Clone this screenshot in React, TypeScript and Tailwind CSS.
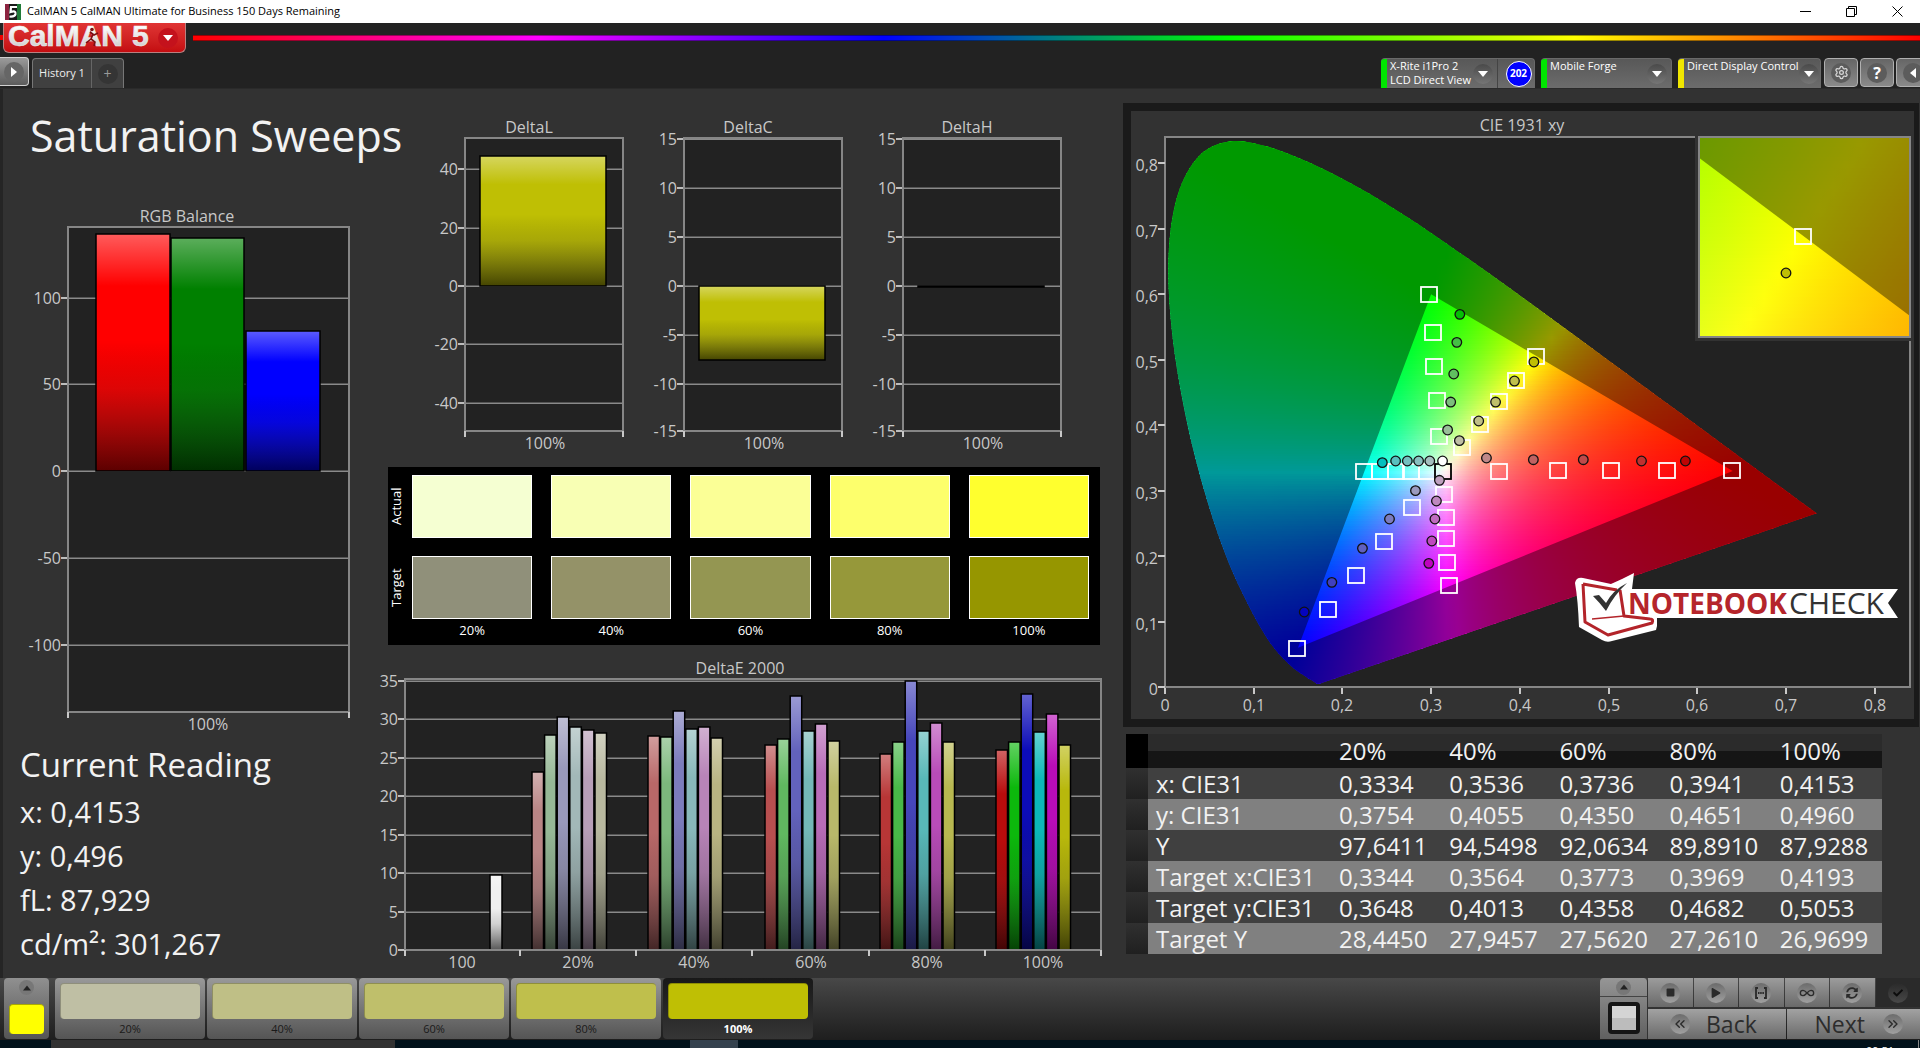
import type { ReactNode } from "react";
import { FaCheck, FaPlay, FaStop, FaSyncAlt } from "react-icons/fa";
import { ChevronsLeft, ChevronsRight, Infinity as InfinityIcon, Settings } from "lucide-react";

const FONT = "'Open Sans', 'Noto Sans', sans-serif";

type Bar = { x: number; width: number; value: number; color: string };

// glossy bar used by every chart, drawn from the zero line
function GlossBar({ bar, y }: { bar: Bar; y: (v: number) => number }) {
  const top = Math.round(y(Math.max(bar.value, 0)));
  const height = Math.max(Math.round(y(Math.min(bar.value, 0))) - top, 1);
  return (
    <g>
      <rect x={bar.x} y={top} width={bar.width} height={height} fill={bar.color} />
      <rect x={bar.x} y={top} width={bar.width} height={height} fill="url(#gloss)" stroke="#000" strokeWidth="1.5" />
    </g>
  );
}

function SharedDefs() {
  return (
    <svg className="absolute h-0 w-0" aria-hidden="true">
      <defs>
        <linearGradient id="gloss" x1="0" y1="0" x2="0" y2="1">
          <stop offset="0" stopColor="#fff" stopOpacity="0.36" />
          <stop offset="0.22" stopColor="#fff" stopOpacity="0" />
          <stop offset="0.45" stopColor="#000" stopOpacity="0" />
          <stop offset="0.65" stopColor="#222" stopOpacity="0.15" />
          <stop offset="1" stopColor="#000" stopOpacity="0.64" />
        </linearGradient>
      </defs>
    </svg>
  );
}

type ChartProps = {
  viewBox: string;
  title: string;
  titleX: number;
  frame: { x: number; y: number; right: number; bottom: number };
  zero: number;
  unit: number;
  ticks: number[];
  categories: { label: string; x: number }[];
  xTicks: number[];
  bars: Bar[];
};

function BarChart({ viewBox, title, titleX, frame, zero, unit, ticks, categories, xTicks, bars }: ChartProps) {
  const y = (v: number) => zero - v * unit;
  const width = frame.right - frame.x;
  return (
    <svg viewBox={viewBox} className="block w-full overflow-visible" role="img" aria-label={title} fontFamily={FONT} fontSize="16" fill="#c8c8c8">
      <text x={titleX} y={frame.y - 5} textAnchor="middle">
        {title}
      </text>
      <rect x={frame.x} y={frame.y} width={width} height={frame.bottom - frame.y} fill="#222" />
      {ticks.map((t) => {
        const line = Math.min(Math.round(y(t)), frame.bottom);
        return (
          <g key={t}>
            <rect x={frame.x} y={line - 1} width={width} height="1" fill="#555" />
            <rect x={frame.x} y={line} width={width} height="1" fill="#8a8a8a" />
            <rect x={frame.x - 7} y={line - 1} width="7" height="2" fill="#bdbdbd" />
            <text x={frame.x - 7} y={line + 6} textAnchor="end">
              {t}
            </text>
          </g>
        );
      })}
      {bars.map((bar) => (
        <GlossBar key={bar.x} bar={bar} y={y} />
      ))}
      <rect x={frame.x} y={frame.y} width={width} height={frame.bottom - frame.y} fill="none" stroke="#868686" strokeWidth="2" />
      {xTicks.map((x) => (
        <rect key={x} x={x - 1} y={frame.bottom} width="2" height="6" fill="#c8c8c8" />
      ))}
      {categories.map((c) => (
        <text key={c.label} x={c.x} y={frame.bottom + 18} textAnchor="middle">
          {c.label}
        </text>
      ))}
    </svg>
  );
}

const YELLOW = "#bfbf04";

const deltaCharts = [
  { title: "DeltaL", zero: 176, unit: 2.92, ticks: [40, 20, 0, -20, -40], value: 44.4 },
  { title: "DeltaC", zero: 176, unit: 9.8, ticks: [15, 10, 5, 0, -5, -10, -15], value: -7.5 },
  { title: "DeltaH", zero: 176, unit: 9.8, ticks: [15, 10, 5, 0, -5, -10, -15], value: 0 },
];

const deltaE = [
  { start: 532, values: [23.1, 27.9, 30.3, 28.9, 28.6, 28.2], colors: ["#b98585", "#96b896", "#9999bb", "#a2b8b8", "#b89fb8", "#b8b89f"] },
  { start: 648, values: [27.8, 27.6, 31, 28.7, 28.9, 27.5], colors: ["#b86868", "#7cb87c", "#7c7cbc", "#88b8ba", "#b884b8", "#b8b482"] },
  { start: 765, values: [26.6, 27.4, 33, 28.5, 29.3, 27.2], colors: ["#b84f4f", "#60b860", "#6262bc", "#74b8b8", "#b86cb8", "#b8b86a"] },
  { start: 880, values: [25.5, 27, 35, 28.5, 29.5, 27], colors: ["#b83636", "#48b848", "#4646bb", "#58b8b8", "#b84cb8", "#b8b850"] },
  { start: 996, values: [26, 27, 33.2, 28.3, 30.6, 26.6], colors: ["#b80c0c", "#0cb80c", "#0c0cb8", "#0cb8b8", "#b80cb8", "#b8b80c"] },
];

const deltaEBars: Bar[] = [
  { x: 490, width: 12, value: 9.7, color: "#f0f0f0" },
  ...deltaE.flatMap((g) =>
    g.values.map((value, i) => ({ x: g.start + i * 12.6, width: 11.5, value, color: g.colors[i] })),
  ),
];

const swatches = [
  { label: "20%", actual: "#f5ffd2", target: "#90907a", step: "#bfbfa4" },
  { label: "40%", actual: "#f8ffb4", target: "#949268", step: "#bfbf86" },
  { label: "60%", actual: "#fbff96", target: "#949652", step: "#bfbf6b" },
  { label: "80%", actual: "#fdff6c", target: "#96983a", step: "#bfbf4c" },
  { label: "100%", actual: "#ffff2e", target: "#969600", step: "#bfbf04" },
];

/* ---- CIE 1931 diagram ---- */

const LOCUS: [number, number][] = [
  [0.1741, 0.005], [0.1714, 0.0051], [0.1644, 0.0109], [0.1566, 0.0177], [0.144, 0.0297],
  [0.1241, 0.0578], [0.1096, 0.0868], [0.0913, 0.1327], [0.0687, 0.2007], [0.0454, 0.295],
  [0.0235, 0.4127], [0.0082, 0.5384], [0.0039, 0.6548], [0.0139, 0.7502], [0.0389, 0.812],
  [0.0743, 0.8338], [0.1142, 0.8262], [0.1547, 0.8059], [0.1929, 0.7816], [0.2296, 0.7543],
  [0.2658, 0.7243], [0.3016, 0.6923], [0.3731, 0.6245], [0.4441, 0.5547], [0.5125, 0.4866],
  [0.5752, 0.4242], [0.627, 0.3725], [0.6658, 0.334], [0.6915, 0.3083], [0.7347, 0.2653],
];
const GAMUT: [number, number][] = [[0.64, 0.33], [0.3, 0.6], [0.15, 0.06]];

type Scale = { x: (v: number) => number; y: (v: number) => number };

const main: Scale = { x: (v) => 1165 + v * 887, y: (v) => 687 - v * 654.5 };
const inset: Scale = { x: (v) => 1786 + (v - 0.4153) * 4260, y: (v) => 273 - (v - 0.496) * 4020 };

// linear sRGB, scaled so that the strongest channel is full
function xyToRgb(x: number, y: number) {
  const X = x / y;
  const Z = (1 - x - y) / y;
  const lin = [
    3.2406 * X - 1.5372 - 0.4986 * Z,
    -0.9689 * X + 1.8758 + 0.0415 * Z,
    0.0557 * X - 0.204 + 1.057 * Z,
  ].map((c) => Math.max(c, 0));
  const peak = Math.max(...lin);
  const [r, g, b] = lin.map((c) => Math.round((255 * c) / peak));
  return `rgb(${r},${g},${b})`;
}

function polygon(points: [number, number][], s: Scale) {
  return "M" + points.map(([x, y]) => `${s.x(x).toFixed(1)} ${s.y(y).toFixed(1)}`).join("L") + "Z";
}

function smoothLocus(s: Scale) {
  const p = LOCUS.map(([x, y]) => [s.x(x), s.y(y)]);
  let d = `M${p[0][0]} ${p[0][1]}`;
  for (let i = 0; i < p.length - 1; i++) {
    const a = p[Math.max(i - 1, 0)];
    const b = p[i];
    const c = p[i + 1];
    const e = p[Math.min(i + 2, p.length - 1)];
    d += `C${b[0] + (c[0] - a[0]) / 6} ${b[1] + (c[1] - a[1]) / 6} ${c[0] - (e[0] - b[0]) / 6} ${c[1] - (e[1] - b[1]) / 6} ${c[0]} ${c[1]}`;
  }
  return d + "Z";
}

// chromaticity fill: one horizontal gradient for every strip of the area
function ColorField({ id, s, from, to, rows, stops }: { id: string; s: Scale; from: [number, number]; to: [number, number]; rows: number; stops: number }) {
  const step = (to[1] - from[1]) / rows;
  const strips = Array.from({ length: rows }, (_, i) => from[1] + i * step);
  const offsets = Array.from({ length: stops + 1 }, (_, i) => i / stops);
  const left = s.x(from[0]);
  const width = s.x(to[0]) - left;
  return (
    <g shapeRendering="crispEdges">
      {strips.map((y, i) => (
        <g key={i}>
          <linearGradient id={`${id}-${i}`}>
            {offsets.map((o) => (
              <stop key={o} offset={o} stopColor={xyToRgb(from[0] + (to[0] - from[0]) * o, y + step / 2)} />
            ))}
          </linearGradient>
          <rect x={left} y={s.y(y + step)} width={width} height={s.y(y) - s.y(y + step) + 0.6} fill={`url(#${id}-${i})`} />
        </g>
      ))}
    </g>
  );
}

const targets: [number, number][] = [
  [0.376, 0.3295], [0.4435, 0.3315], [0.503, 0.3315], [0.5665, 0.3315], [0.639, 0.3315],
  [0.298, 0.6005], [0.302, 0.5424], [0.3037, 0.4905], [0.307, 0.438], [0.3094, 0.3835],
  [0.4187, 0.5057], [0.3957, 0.4696], [0.3762, 0.4375], [0.3549, 0.4018], [0.3347, 0.3662],
  [0.2243, 0.3295], [0.2424, 0.3295], [0.26, 0.3295], [0.2778, 0.3295], [0.295, 0.3295],
  [0.3146, 0.2954], [0.3163, 0.2592], [0.3163, 0.2277], [0.3181, 0.191], [0.3198, 0.1553],
  [0.279, 0.275], [0.2473, 0.2231], [0.2157, 0.1711], [0.1835, 0.1192], [0.1484, 0.0596],
];

const readings: [number, number, string][] = [
  [0.3129, 0.3453, "#ffffff"],
  [0.3624, 0.3499, "#bf8888"], [0.4153, 0.3473, "#bf6262"], [0.4716, 0.3473, "#bf4a4a"], [0.5372, 0.3453, "#bf3030"], [0.5867, 0.3453, "#bf0404"],
  [0.3186, 0.3927, "#98bf98"], [0.3221, 0.4354, "#7cbf7c"], [0.3255, 0.4782, "#60bf60"], [0.329, 0.5266, "#44bf44"], [0.3324, 0.5694, "#04bf04"],
  [0.3319, 0.3764, "#bfbfa4"], [0.3537, 0.4064, "#bfbf86"], [0.3727, 0.4354, "#bfbf6b"], [0.394, 0.4675, "#bfbf4c"], [0.4159, 0.4966, "#bfbf04"],
  [0.245, 0.3428, "#04bfbf"], [0.26, 0.3453, "#58bfbf"], [0.2732, 0.3453, "#74bfbf"], [0.2859, 0.3453, "#88bfbf"], [0.2985, 0.3453, "#a4bfbf"],
  [0.3094, 0.3158, "#bfa0bf"], [0.306, 0.2842, "#bf88bf"], [0.3043, 0.2567, "#bf6cbf"], [0.3008, 0.2231, "#bf48bf"], [0.2974, 0.1889, "#bf04bf"],
  [0.2824, 0.3, "#9a9abf"], [0.2531, 0.2567, "#7c7cbf"], [0.2226, 0.2119, "#6060bf"], [0.1881, 0.1599, "#4040bf"], [0.157, 0.1146, "#0404bf"],
];

function Target({ x, y, color = "#fff" }: { x: number; y: number; color?: string }) {
  return <rect x={Math.round(x) - 8} y={Math.round(y) - 7} width="16" height="15" fill="none" stroke={color} strokeWidth="1.8" />;
}

function NotebookcheckLogo() {
  return (
    <g>
      <path d="M1624 589H1898L1888 603L1898 618H1657V626L1656 630L1612 641Q1607 643 1602 640L1579 627Q1578 600 1575 583Q1576 577 1583 578L1611 584L1622 579L1634 573L1632 589Z" fill="#fff" />
      <path d="M1583 584L1617 590M1583 584L1585 622L1608 635L1652 623Q1654 619 1650 619L1624 616L1620 590" fill="none" stroke="#b3242a" strokeWidth="3" strokeLinejoin="round" />
      <path d="M1592 619L1624 616" stroke="#b3242a" strokeWidth="1.5" />
      <path d="M1593 596L1599 595L1606 603Q1613 590 1627 583Q1614 595 1606 611Q1600 603 1593 596Z" fill="#333" />
      <text x="1628" y="614" fontSize="28" fontWeight="700" fill="#b5252b">
        NOTEBOOK
      </text>
      <text x="1789" y="614" fontSize="30" fill="#333">
        CHECK
      </text>
    </g>
  );
}

function CieDiagram() {
  const locus = smoothLocus(main);
  return (
    <svg viewBox="1131 111 783 608" className="block w-full" role="img" aria-label="CIE 1931 xy" fontFamily={FONT} fontSize="16" fill="#c8c8c8">
      <defs>
        <clipPath id="locus-clip">
          <path d={locus} />
        </clipPath>
        <clipPath id="inset-clip">
          <rect x="1699" y="137" width="211" height="200" />
        </clipPath>
      </defs>
      <text x="1522" y="131" textAnchor="middle">
        CIE 1931 xy
      </text>
      <rect x="1165" y="137" width="745" height="550" fill="#222" stroke="#868686" strokeWidth="2" />
      <g clipPath="url(#locus-clip)">
        <ColorField id="cie" s={main} from={[0, 0.002]} to={[0.74, 0.842]} rows={220} stops={56} />
        <path d={locus + polygon(GAMUT, main)} fill="#000" fillOpacity="0.4" fillRule="evenodd" />
      </g>
      {[0, 1, 2, 3, 4, 5, 6, 7, 8].map((n) => {
        const label = n === 0 ? "0" : `0,${n}`;
        return (
          <g key={n}>
            <rect x={Math.round(main.x(n / 10)) - 1} y="688" width="2" height="6" fill="#c8c8c8" />
            <text x={Math.round(main.x(n / 10))} y="711" textAnchor="middle">
              {label}
            </text>
            <rect x="1158" y={Math.round(main.y(n / 10)) - 1} width="7" height="2" fill="#c8c8c8" />
            <text x="1158" y={Math.round(main.y(n / 10)) + 8} textAnchor="end">
              {label}
            </text>
          </g>
        );
      })}
      {targets.map(([x, y]) => (
        <Target key={`${x}-${y}`} x={main.x(x)} y={main.y(y)} />
      ))}
      <Target x={main.x(0.3129)} y={main.y(0.3295)} color="#000" />
      {readings.map(([x, y, color]) => (
        <circle key={`${x}-${y}`} cx={main.x(x)} cy={main.y(y)} r="4.8" fill={color} stroke="#111" strokeWidth="1.3" />
      ))}

      <rect x="1695" y="134" width="219" height="207" fill="#323232" />
      <g clipPath="url(#inset-clip)">
        <ColorField id="zoom" s={inset} from={[0.394, 0.479]} to={[0.446, 0.531]} rows={60} stops={16} />
        <path d={"M1690 130H1920V345H1690Z" + polygon(GAMUT, inset)} fill="#000" fillOpacity="0.4" fillRule="evenodd" />
      </g>
      <rect x="1699" y="137" width="211" height="200" fill="none" stroke="#868686" strokeWidth="2" />
      <Target x={inset.x(0.4193)} y={inset.y(0.5053)} />
      <circle cx={inset.x(0.4153)} cy={inset.y(0.496)} r="4.8" fill="#bfbf04" stroke="#111" strokeWidth="1.3" />
      <NotebookcheckLogo />
    </svg>
  );
}

const table = [
  ["x: CIE31", "0,3334", "0,3536", "0,3736", "0,3941", "0,4153"],
  ["y: CIE31", "0,3754", "0,4055", "0,4350", "0,4651", "0,4960"],
  ["Y", "97,6411", "94,5498", "92,0634", "89,8910", "87,9288"],
  ["Target x:CIE31", "0,3344", "0,3564", "0,3773", "0,3969", "0,4193"],
  ["Target y:CIE31", "0,3648", "0,4013", "0,4358", "0,4682", "0,5053"],
  ["Target Y", "28,4450", "27,9457", "27,5620", "27,2610", "26,9699"],
];

function ReadingsTable() {
  return (
    <table className="w-full table-fixed border-collapse text-left text-[24px] leading-[30px] text-[#f2f2f2]">
      <colgroup>
        <col className="w-[22px]" />
        <col className="w-[183px]" />
        <col />
        <col />
        <col />
        <col />
        <col />
      </colgroup>
      <thead>
        <tr className="h-[34px] bg-linear-to-b from-[#2b2b2b] from-50% to-[#151515] to-50%">
          <td className="bg-black" />
          <td />
          {swatches.map((s) => (
            <th key={s.label} scope="col" className="px-2 font-normal">
              {s.label}
            </th>
          ))}
        </tr>
      </thead>
      <tbody>
        {table.map(([label, ...values]) => (
          <tr key={label} className="h-[31px] bg-[#404040] even:bg-[#808080]">
            <td className="bg-linear-to-b from-[#303030] to-[#202020]" />
            <th scope="row" className="px-2 font-normal whitespace-nowrap">
              {label}
            </th>
            {values.map((v) => (
              <td key={v} className="px-2">
                {v}
              </td>
            ))}
          </tr>
        ))}
      </tbody>
    </table>
  );
}

/* ---- chrome ---- */

function Knob({ children, dark = false }: { children: ReactNode; dark?: boolean }) {
  return (
    <span
      className={
        dark
          ? "flex h-5 w-5 shrink-0 items-center justify-center rounded-full bg-linear-to-b from-[#2a2a2a] to-[#484848] text-[#0c0c0c]"
          : "flex h-5 w-5 shrink-0 items-center justify-center rounded-full bg-linear-to-b from-[#6c6c6c] to-[#a0a0a0] text-[#2a2a2a]"
      }
    >
      {children}
    </span>
  );
}

function Triangle({ d, className }: { d: string; className: string }) {
  return (
    <svg viewBox="0 0 10 10" className={className} fill="currentColor" aria-hidden="true">
      <path d={d} />
    </svg>
  );
}

const DOWN = "M0 2H10L5 8Z";
const UP = "M0 8H10L5 2Z";
const RIGHT = "M2 0V10L8 5Z";
const LEFT = "M8 0V10L2 5Z";

function TitleBar() {
  return (
    <header className="flex h-[23px] items-center bg-white text-[11px] text-black">
      <svg viewBox="0 0 16 16" className="ml-[5px] h-4 w-4" aria-hidden="true">
        <rect width="16" height="16" fill="#1a1a1a" />
        <path d="M0 0H4V16H0Z" fill="#8c2440" />
        <path d="M12 0H16V16H12Z" fill="#207a38" />
        <path d="M12 3H6L5.500 8Q11 6 10.500 10Q10 13 4.500 12.500" fill="none" stroke="#fff" strokeWidth="2.200" />
      </svg>
      <h2 className="ml-[6px]">CalMAN 5 CalMAN Ultimate for Business 150 Days Remaining</h2>
      <div className="ml-auto flex">
        <button type="button" aria-label="Minimize" className="flex h-[23px] w-[46px] items-center justify-center">
          <svg viewBox="0 0 11 11" className="h-[11px] w-[11px]" stroke="#000" fill="none">
            <path d="M0 5.500H11" />
          </svg>
        </button>
        <button type="button" aria-label="Restore" className="flex h-[23px] w-[46px] items-center justify-center">
          <svg viewBox="0 0 11 11" className="h-[11px] w-[11px]" stroke="#000" fill="none">
            <path d="M0.500 2.500H8.500V10.500H0.500ZM2.500 2.500V0.500H10.500V8.500H8.500" />
          </svg>
        </button>
        <button type="button" aria-label="Close" className="flex h-[23px] w-[46px] items-center justify-center">
          <svg viewBox="0 0 11 11" className="h-[11px] w-[11px]" stroke="#000" fill="none">
            <path d="M0.500 0.500L10.500 10.500M10.500 0.500L0.500 10.500" />
          </svg>
        </button>
      </div>
    </header>
  );
}

function BrandBar() {
  return (
    <div className="flex h-[34px] items-start bg-[#222]">
      <div className="mt-3 h-[5px] w-[3px] bg-[#e00]" />
      <button
        type="button"
        aria-label="CalMAN 5 menu"
        className="flex h-[30px] w-[183px] items-center rounded-b-md border border-t-0 border-[#b98080] bg-linear-to-b from-[#e03434] to-[#c40c10] pl-1"
      >
        <svg viewBox="0 0 146 28" className="h-7 w-[146px] overflow-visible" aria-hidden="true">
          <defs>
            <linearGradient id="brand" x1="0" y1="0" x2="0" y2="1">
              <stop offset="0.2" stopColor="#fff" />
              <stop offset="1" stopColor="#c4c4c4" />
            </linearGradient>
          </defs>
          <g fontFamily="'Liberation Sans', sans-serif" fontWeight="700" fill="url(#brand)" stroke="#eee" strokeWidth="0.6">
            <text x="0" y="22" fontSize="30">
              CalMAN
            </text>
            <text x="124" y="22" fontSize="30">
              5
            </text>
          </g>
          <path d="M82 8l4 3l4-2M85 10l-2 5l4 3l-1 4M83 15l-5 4" fill="none" stroke="#7c1010" strokeWidth="1.6" />
          <circle cx="84" cy="5.500" r="1.800" fill="#7c1010" />
        </svg>
        <span className="ml-1 flex h-5 w-5 items-center justify-center rounded-full bg-[#c4121c] text-white">
          <Triangle d={DOWN} className="h-[10px] w-[10px]" />
        </span>
      </button>
      <div className="mt-3 ml-[7px] h-[6px] flex-1 border-y border-black/40 [background-image:linear-gradient(90deg,#f00,#f0f_20%,#00f_40%,#0f0_60%,#ff0_80%,#f00)]" />
    </div>
  );
}

function DeviceTab({ lines, strip, badge, width }: { lines: string[]; strip: string; badge?: string; width: string }) {
  return (
    <div className={`flex h-[30px] overflow-hidden rounded-t border-t border-r border-[#6a6a6a] bg-linear-to-b from-[#585858] to-[#6c6c6c] ${width}`}>
      <span className={`w-[6px] shrink-0 ${strip}`} />
      <button type="button" aria-haspopup="menu" className="flex min-w-0 flex-1 items-start pl-[3px] text-left text-[11px] leading-[14px] text-white">
        <span className="flex-1 whitespace-nowrap">
          {lines.map((l) => (
            <span key={l} className="block">
              {l}
            </span>
          ))}
        </span>
        <span className="mt-[5px] mr-[4px] flex h-5 w-5 shrink-0 items-center justify-center rounded-full bg-linear-to-b from-[#4a4a4a] to-[#767676]">
          <Triangle d={DOWN} className="h-[10px] w-[10px]" />
        </span>
      </button>
      {badge && (
        <span className="flex w-[37px] shrink-0 items-center justify-center border-l border-[#444] pl-[5px]">
          <span className="flex h-[26px] w-[26px] items-center justify-center rounded-full border border-white bg-[#00f] text-[10px] font-bold text-white">
            {badge}
          </span>
        </span>
      )}
    </div>
  );
}

function TabRow() {
  const square =
    "flex h-[29px] w-[34px] shrink-0 items-center justify-center rounded border border-[#b0b0b0] bg-linear-to-b from-[#666] to-[#8a8a8a] text-white";
  return (
    <nav className="flex h-[31px] items-start overflow-hidden bg-[#222]">
      <button type="button" aria-label="Expand" className="flex h-[29px] w-[29px] items-center justify-center rounded-r border border-l-0 border-[#d0d0d0] bg-linear-to-b from-[#9a9a9a] to-[#5c5c5c] text-white">
        <span className="flex h-5 w-5 items-center justify-center rounded-full bg-[#666]">
          <Triangle d={RIGHT} className="h-[10px] w-[10px]" />
        </span>
      </button>
      <div className="mt-px ml-[3px] flex h-[30px] rounded-t border border-b-0 border-[#777] bg-[#404040] text-[11px] text-[#eee]">
        <button type="button" className="w-[58px]">
          History 1
        </button>
        <button type="button" aria-label="Add history" className="flex w-8 items-center justify-center border-l border-[#666]">
          <span className="flex h-5 w-5 items-center justify-center rounded-full bg-[#353535] text-sm text-[#999]">+</span>
        </button>
      </div>
      <div className="mt-px ml-auto flex gap-[6px]">
        <DeviceTab width="w-[154px]" strip="bg-[#00e600]" lines={["X-Rite i1Pro 2", "LCD Direct View"]} badge="202" />
        <DeviceTab width="w-[131px]" strip="bg-[#00e600]" lines={["Mobile Forge"]} />
        <DeviceTab width="w-[143px]" strip="bg-[#f0e600]" lines={["Direct Display Control"]} />
      </div>
      <div className="mt-px -mr-[10px] ml-[3px] flex gap-[2px]">
        <button type="button" aria-label="Settings" className={square}>
          <span className="flex h-5 w-5 items-center justify-center rounded-full bg-[#5c5c5c]">
            <Settings className="h-[15px] w-[15px] text-[#d8d8d8]" />
          </span>
        </button>
        <button type="button" aria-label="Help" className={square}>
          <span className="flex h-5 w-5 items-center justify-center rounded-full bg-[#5c5c5c] text-base font-bold">?</span>
        </button>
        <button type="button" aria-label="Collapse" className={square}>
          <span className="flex h-5 w-5 items-center justify-center rounded-full bg-[#5c5c5c]">
            <Triangle d={LEFT} className="h-[10px] w-[10px]" />
          </span>
        </button>
      </div>
    </nav>
  );
}

function SwatchPanel() {
  return (
    <section aria-label="Actual and target colors" className="mt-[7px] mr-[23px] flex h-[178px] bg-black pt-2 pr-[11px] text-[13px] font-medium text-white">
      <div className="flex w-6 flex-col gap-[18px]">
        {["Actual", "Target"].map((name) => (
          <span key={name} className="flex h-[63px] w-[18px] rotate-180 items-center justify-center [writing-mode:vertical-rl]">
            {name}
          </span>
        ))}
      </div>
      <div className="grid flex-1 grid-cols-5 gap-x-[19px]">
        {swatches.map((s) => (
          <div key={s.label} className="text-center">
            <div className="h-[63px] border border-white" style={{ backgroundColor: s.actual }} />
            <div className="mt-[18px] h-[63px] border border-white" style={{ backgroundColor: s.target }} />
            <p className="leading-[22px]">{s.label}</p>
          </div>
        ))}
      </div>
    </section>
  );
}

const transport: { label: string; icon: ReactNode }[] = [
  { label: "Stop", icon: <FaStop className="h-[9px] w-[9px]" /> },
  { label: "Play", icon: <FaPlay className="h-[10px] w-[10px]" /> },
  {
    label: "Read series",
    icon: (
      <svg viewBox="0 0 14 12" className="h-3 w-[14px]" fill="none" stroke="currentColor" strokeWidth="1.800">
        <path d="M4 1H2V11H4M10 1H12V11H10" />
        <path d="M4 6H10" strokeDasharray="1.500 0.700" />
      </svg>
    ),
  },
  { label: "Continuous", icon: <InfinityIcon className="h-4 w-4" /> },
  { label: "Refresh", icon: <FaSyncAlt className="h-3 w-3" /> },
];

function BottomBar() {
  return (
    <footer className="flex h-[62px] bg-linear-to-b from-[#484848] to-[#1e1e1e]">
      <button type="button" aria-label="Current color" className="ml-1 flex h-[61px] w-[45px] flex-col items-center rounded bg-linear-to-b from-[#909090] to-[#555] pt-[2px]">
        <span className="flex h-[15px] w-[15px] items-center justify-center rounded-full bg-[#777] text-[#222]">
          <Triangle d={UP} className="h-2 w-2" />
        </span>
        <span className="mt-[9px] h-[30px] w-[35px] rounded-sm border-t border-l border-[#aaaa00] bg-[#ff0]" />
      </button>
      <div className="ml-[6px] flex gap-[2px]">
        {swatches.map((s) => {
          const current = s.label === "100%";
          return (
            <button
              key={s.label}
              type="button"
              aria-pressed={current}
              className={
                current
                  ? "h-[61px] w-[150px] rounded bg-linear-to-b from-[#181818] to-[#363636] px-[5px] pt-[5px] text-[11px] font-bold text-white"
                  : "h-[61px] w-[150px] rounded bg-linear-to-b from-[#999] to-[#555] px-[5px] pt-[5px] text-[11px] font-medium text-[#1a1a1a]"
              }
            >
              <span className="block h-9 rounded border-t border-l border-black/25" style={{ backgroundColor: s.step }} />
              <span className="block leading-5">{s.label}</span>
            </button>
          );
        })}
      </div>
      <div className="ml-auto flex">
        <button type="button" aria-label="Pattern window" className="flex h-[61px] w-12 flex-col items-center rounded-t border-r border-[#333] bg-linear-to-b from-[#969696] to-[#606060]">
          <span className="flex h-[19px] w-full items-center justify-center border-b border-[#444]">
            <span className="flex h-[15px] w-[15px] items-center justify-center rounded-full bg-[#777] text-[#222]">
              <Triangle d={UP} className="h-2 w-2" />
            </span>
          </span>
          <span className="mt-[5px] h-8 w-8 rounded border-4 border-[#151515] bg-linear-to-b from-[#d4d4d4] from-50% to-[#bcbcbc] to-50%" />
        </button>
        <div className="w-[272px]">
          <div className="flex h-[30px] gap-px pb-px">
            {transport.map((t) => (
              <button key={t.label} type="button" aria-label={t.label} className="flex flex-1 items-center justify-center bg-linear-to-b from-[#9c9c9c] to-[#6a6a6a]">
                <Knob>{t.icon}</Knob>
              </button>
            ))}
            <button type="button" aria-label="Apply" className="flex flex-1 items-center justify-center bg-[#2a2a2a]">
              <Knob dark>
                <FaCheck className="h-[10px] w-[10px]" />
              </Knob>
            </button>
          </div>
          <div className="mt-px flex h-[30px] gap-px text-[23px] leading-[28px] font-medium text-[#2c2c2c]">
            <button type="button" className="flex flex-1 items-center gap-4 bg-linear-to-b from-[#a2a2a2] to-[#6a6a6a] pl-[22px]">
              <Knob>
                <ChevronsLeft className="h-4 w-4" />
              </Knob>
              Back
            </button>
            <button type="button" className="flex flex-1 items-center justify-end gap-[18px] bg-linear-to-b from-[#a2a2a2] to-[#6a6a6a] pr-[17px]">
              Next
              <Knob>
                <ChevronsRight className="h-4 w-4" />
              </Knob>
            </button>
          </div>
        </div>
      </div>
    </footer>
  );
}

function Taskbar() {
  return (
    <div className="flex h-2 overflow-hidden bg-[#02121b] text-[11px] leading-4 text-white">
      <span className="w-[51px]" />
      <span className="w-[344px] bg-[#323232]" />
      <span className="w-[295px]" />
      <span className="w-12 bg-[#35424e]" />
      <time className="mt-[3px] mr-6 ml-auto">09:51</time>
      <span className="mr-px w-px bg-[#8a8a8a]" />
    </div>
  );
}

export default function App() {
  return (
    <div className="flex min-h-screen flex-col bg-[#323232] font-['Open_Sans','Noto_Sans',sans-serif]">
      <SharedDefs />
      <TitleBar />
      <BrandBar />
      <TabRow />
      <main className="grid flex-1 grid-cols-[388fr_735fr_797fr] border-t border-[#2a2a2a] text-[#f2f2f2]">
        <section className="min-w-0 shadow-[inset_3px_0_0_#252525]">
          <h1 className="h-[75px] pt-[17px] pl-[30px] text-[43px] leading-[60px] whitespace-nowrap">Saturation Sweeps</h1>
          <BarChart
            viewBox="0 164 388 572"
            title="RGB Balance"
            titleX={187}
            frame={{ x: 68, y: 227, right: 349, bottom: 712 }}
            zero={471}
            unit={1.735}
            ticks={[100, 50, 0, -50, -100]}
            categories={[{ label: "100%", x: 208 }]}
            xTicks={[68, 349]}
            bars={[
              { x: 96, width: 74, value: 136.5, color: "#ff0000" },
              { x: 171, width: 73, value: 134.5, color: "#008000" },
              { x: 246, width: 74, value: 80.5, color: "#0000ff" },
            ]}
          />
          <div className="pt-[7px] pl-5 text-[29px] leading-[44px]">
            <h2 className="mb-[3px] text-[33px] leading-[44px]">Current Reading</h2>
            <p>x: 0,4153</p>
            <p>y: 0,496</p>
            <p>fL: 87,929</p>
            <p>cd/m²: 301,267</p>
          </div>
        </section>

        <section className="min-w-0">
          <div className="grid grid-cols-3 pt-[21px] pr-12 pl-[30px]">
            {deltaCharts.map((c) => (
              <BarChart
                key={c.title}
                viewBox="0 0 219 350"
                title={c.title}
                titleX={111}
                frame={{ x: 47, y: 28, right: 205, bottom: 321 }}
                zero={c.zero}
                unit={c.unit}
                ticks={c.ticks}
                categories={[{ label: "100%", x: 127 }]}
                xTicks={[47, 205]}
                bars={[{ x: 62, width: 126, value: c.value, color: YELLOW }]}
              />
            ))}
          </div>
          <SwatchPanel />
          <BarChart
            viewBox="388 645 735 330"
            title="DeltaE 2000"
            titleX={740}
            frame={{ x: 405, y: 679, right: 1101, bottom: 950 }}
            zero={950}
            unit={7.7}
            ticks={[35, 30, 25, 20, 15, 10, 5, 0]}
            categories={[
              { label: "100", x: 462 },
              { label: "20%", x: 578 },
              { label: "40%", x: 694 },
              { label: "60%", x: 811 },
              { label: "80%", x: 927 },
              { label: "100%", x: 1043 },
            ]}
            xTicks={[405, 520, 636, 752, 869, 985, 1101]}
            bars={deltaEBars}
          />
        </section>

        <section className="min-w-0">
          <div className="mt-[14px] mr-px border-[8px] border-r-[5px] border-[#1a1a1a]">
            <CieDiagram />
          </div>
          <div className="mt-[7px] mr-[38px] ml-[3px]">
            <ReadingsTable />
          </div>
        </section>
      </main>
      <BottomBar />
      <Taskbar />
    </div>
  );
}
